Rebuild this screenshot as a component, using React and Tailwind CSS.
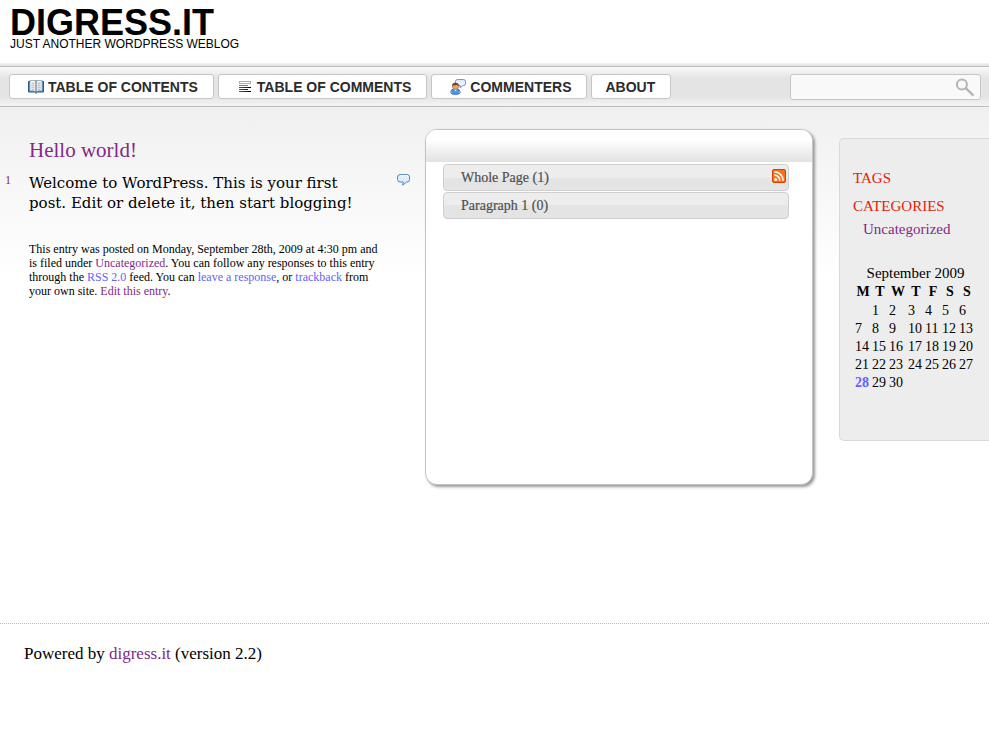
import React from 'react';

const purple = 'text-[#822a87]';
const blue = 'text-[#6262ff]';

const weeks = [
  ['', 1, 2, 3, 4, 5, 6],
  [7, 8, 9, 10, 11, 12, 13],
  [14, 15, 16, 17, 18, 19, 20],
  [21, 22, 23, 24, 25, 26, 27],
  [28, 29, 30, '', '', '', ''],
];

function BookIcon() {
  return (
    <svg width="16" height="14" viewBox="0 0 16 14" aria-hidden="true">
      <path d="M0.5 1.5H1.5V1H14.5V1.5H15.5V12H9.5L8 13.3L6.5 12H0.5Z" fill="#4a86bf" stroke="#265a8c" />
      <path d="M2 1C4.5 0.3 6.7 0.5 8 1.6V11.8C6.3 10.6 4.3 10.5 2 11Z" fill="#fff" stroke="#7d99b3" strokeWidth="0.6" />
      <path d="M14 1C11.5 0.3 9.3 0.5 8 1.6V11.8C9.7 10.6 11.7 10.5 14 11Z" fill="#f6f6f6" stroke="#7d99b3" strokeWidth="0.6" />
      <path d="M3.3 3.2H6.5M3.3 5.2H6.5M3.3 7.2H6.5M3.3 9.2H6.5M9.5 3.2H12.7M9.5 5.2H12.7M9.5 7.2H12.7M9.5 9.2H12.7" stroke="#a5a5a5" strokeWidth="0.9" />
      <path d="M8 1.6V12.4" stroke="#777" strokeWidth="0.8" />
    </svg>
  );
}

function LinesIcon() {
  return (
    <svg width="14" height="11" viewBox="0 0 14 11" shapeRendering="crispEdges" aria-hidden="true">
      <defs>
        <linearGradient id="rule" x1="0" x2="12" y1="0" y2="0" gradientUnits="userSpaceOnUse">
          <stop offset="0" stopColor="#555" />
          <stop offset="1" stopColor="#000" />
        </linearGradient>
      </defs>
      <path d="M0 0.5H12M0 2.5H12M0.5 0V3M11.5 0V3" stroke="#acacac" />
      <path d="M0 4H9V5H0Z" fill="#777" />
      <path d="M0 6H12V7H0Z" fill="url(#rule)" />
      <path d="M0 8H9V9H0Z" fill="url(#rule)" />
      <path d="M0 10H12V11H0Z" fill="url(#rule)" />
    </svg>
  );
}

function CommenterIcon() {
  return (
    <svg width="16" height="16" viewBox="0 0 16 16" aria-hidden="true">
      <path d="M7.4 0.6H13.6Q15.5 0.8 15.5 2.4V4.6Q15.5 6.4 13.6 6.6H12.6L10.2 9V6.6H7.4Q5.4 6.4 5.4 4.6V2.4Q5.4 0.8 7.4 0.6Z" fill="#eaf3ff" stroke="#5c8fcc" />
      <path d="M0.7 13.5Q0.8 10.4 3.5 10H7.2Q10 10.4 10.2 13.5Q10 15.4 5.5 15.4Q0.8 15.4 0.7 13.5Z" fill="#4d97f0" stroke="#2762b4" strokeWidth="0.8" />
      <path d="M3.8 10.2L5.5 12L7.2 10.2" fill="#fff" />
      <circle cx="5.5" cy="7.4" r="3" fill="#e9a468" stroke="#a0622f" strokeWidth="0.6" />
      <path d="M2.1 7.4Q1.6 3.8 5.5 3.7Q9.2 3.8 8.9 7.2Q7.5 6.5 6.8 5.7Q5 6.8 3.3 6.3Q2.6 6.6 2.1 7.4Z" fill="#7a4320" />
      <path d="M1.5 12.4V14M9.4 12.4V14" stroke="#e9a468" strokeWidth="1.2" />
    </svg>
  );
}

function SearchIcon() {
  return (
    <svg width="20" height="19" viewBox="0 0 20 19" fill="none" stroke="#b5b5b5" aria-hidden="true">
      <circle cx="6.9" cy="6.4" r="5" strokeWidth="2" />
      <path d="M10.5 9.8L18.5 17.6" strokeWidth="2.4" />
    </svg>
  );
}

function BubbleIcon() {
  return (
    <svg width="14" height="12" viewBox="0 0 14 12" aria-hidden="true">
      <path d="M3 0.6H10Q12.5 0.6 12.5 3V5.6Q12.5 8 10 8H9.6L5.7 11.2L6.3 8H3Q0.6 8 0.6 5.6V3Q0.6 0.6 3 0.6Z" fill="#deedff" stroke="#5286c0" />
      <path d="M3 1.8H10Q11.3 1.8 11.3 3" fill="none" stroke="#fff" />
    </svg>
  );
}

function RssIcon() {
  return (
    <svg width="14" height="14" viewBox="0 0 14 14" aria-hidden="true">
      <rect x="0.5" y="0.5" width="13" height="13" rx="1.5" fill="#f8741b" stroke="#de3a08" />
      <circle cx="3.7" cy="10.4" r="1.5" fill="#fff" />
      <path d="M2.4 6.1A5.5 5.5 0 0 1 7.9 11.7M2.4 2.9A8.8 8.8 0 0 1 11.2 11.7" fill="none" stroke="#fff" strokeWidth="1.6" />
    </svg>
  );
}

function NavItem({ icon, children, className }) {
  return (
    <li>
      <a
        href="#"
        className={`flex h-[25px] items-center gap-1 rounded-[3px] border border-[#c6c6c6] bg-white text-[14px] leading-4 font-bold whitespace-nowrap text-[#2b2b2b] ${className}`}
      >
        {icon}
        {children}
      </a>
    </li>
  );
}

function Section({ title, rss }) {
  return (
    <li className="flex h-[27px] items-start justify-between rounded border border-[#cfcfcf] bg-linear-to-b from-[#ededed] from-50% to-[#e4e4e4] to-50% pr-[2px] pl-[17px]">
      <button type="button" className="mt-1 text-left text-[14px] leading-[18px] text-[#505050] [-webkit-text-stroke:0.2px_#505050]">
        {title}
      </button>
      {rss && (
        <a href="#" aria-label="Comments feed" className="mt-1">
          <RssIcon />
        </a>
      )}
    </li>
  );
}

export default function App() {
  return (
    <div className="min-h-screen bg-white font-['Liberation_Serif',serif] text-black">
      <header className="h-[63px] pt-1 pl-[10px] font-['Liberation_Sans',sans-serif]">
        <h1 className="text-[36px] leading-[38px] font-bold">DIGRESS.IT</h1>
        <p className="-mt-[6px] text-[12px] leading-4">JUST ANOTHER WORDPRESS WEBLOG</p>
      </header>

      <div className="h-[3px] bg-linear-to-b from-[#f5f5f5] to-[#dedede]" />
      <nav className="flex h-[41px] items-start justify-between border-y border-[#bdbdbd] bg-[linear-gradient(#f9f9f9,#e4e4e4_30%,#e4e4e4_75%,#f4f4f4)] pt-[7px] pr-2 pl-[9px] font-['Liberation_Sans',sans-serif]">
        <ul className="flex gap-1">
          <NavItem icon={<BookIcon />} className="pr-[15px] pl-[18px]">TABLE OF CONTENTS</NavItem>
          <NavItem icon={<LinesIcon />} className="pr-[15px] pl-5">TABLE OF COMMENTS</NavItem>
          <NavItem icon={<CommenterIcon />} className="pr-[15px] pl-[18px]">COMMENTERS</NavItem>
          <NavItem className="pr-[15px] pl-[13px]">ABOUT</NavItem>
        </ul>
        <form className="flex h-[26px] w-[191px] items-center rounded-[3px] border border-[#c6c6c6] bg-[#f9f9f9] pr-[5px]" onSubmit={(e) => e.preventDefault()}>
          <input type="search" aria-label="Search" className="min-w-0 flex-1 bg-transparent px-2 text-[14px] outline-none" />
          <button type="submit" aria-label="Search">
            <SearchIcon />
          </button>
        </form>
      </nav>

      <main className="flex min-h-[516px] items-start bg-linear-to-b from-[#f0f0f0] to-white to-[170px]">
        <article className="min-w-0 flex-1 pt-[29px] pr-[14px] pl-[5px]">
          <h2 className={`pl-6 text-[21px] leading-7 ${purple}`}>
            <a href="#">Hello world!</a>
          </h2>
          <div className="mt-[9px] flex items-start">
            <a href="#" className={`w-6 text-[12px] leading-[14px] ${purple}`}>1</a>
            <p className="min-w-0 flex-1 pr-8 font-['DejaVu_Serif',serif] text-[15px] leading-5">
              Welcome to WordPress. This is your first post. Edit or delete it, then start blogging!
            </p>
            <a href="#" aria-label="Comment on paragraph 1" className="pt-px">
              <BubbleIcon />
            </a>
          </div>
          <p className="mt-[29px] pl-6 text-[12px] leading-[14px]">
            This entry was posted on Monday, September 28th, 2009 at 4:30 pm and<br />
            is filed under <a href="#" className={purple}>Uncategorized</a>. You can follow any responses to this entry<br />
            through the <a href="#" className={blue}>RSS 2.0</a> feed. You can <a href="#" className={blue}>leave a response</a>, or{' '}
            <a href="#" className={blue}>trackback</a> from<br />
            your own site. <a href="#" className={purple}>Edit this entry</a>.
          </p>
        </article>

        <section className="mt-[22px] h-[356px] w-[388px] shrink-0 overflow-hidden rounded-[12px] border border-[#c4c4c4] bg-white shadow-[2px_2px_3px_#999]">
          <div className="h-8 bg-linear-to-b from-white from-30% to-[#e2e2e2]" />
          <ul className="flex flex-col gap-px pt-[2px] pr-[23px] pl-[17px]">
            <Section title="Whole Page (1)" rss />
            <Section title="Paragraph 1 (0)" />
          </ul>
        </section>

        <aside className="mt-[31px] ml-[26px] h-[303px] w-[150px] shrink-0 rounded-l-[5px] border border-r-0 border-[#d9d9d9] bg-[#ededed] pt-[25px] pl-[13px] text-[15px]">
          <h3 className="leading-7 text-[#e01f08]">TAGS</h3>
          <h3 className="leading-7 text-[#e01f08]">CATEGORIES</h3>
          <ul className="pl-[10px] leading-[18px]">
            <li><a href="#" className={purple}>Uncategorized</a></li>
          </ul>
          <table className="mt-[26px] ml-[2px] table-fixed border-collapse text-left text-[14px] leading-[18px]">
            <caption className="text-[15px] leading-[18px]">September 2009</caption>
            <colgroup>
              <col className="w-[17px]" />
              <col className="w-[17px]" />
              <col className="w-[19px]" />
              <col className="w-[17px]" />
              <col className="w-[17px]" />
              <col className="w-[17px]" />
              <col className="w-[17px]" />
            </colgroup>
            <thead>
              <tr className="h-5 font-bold">
                {['M', 'T', 'W', 'T', 'F', 'S', 'S'].map((d, i) => (
                  <th key={i} scope="col" className="p-0 pr-px text-center">{d}</th>
                ))}
              </tr>
            </thead>
            <tbody>
              {weeks.map((week, i) => (
                <tr key={i}>
                  {week.map((day, j) => (
                    <td key={j} className="p-0">
                      {day === 28 ? <a href="#" className={`font-bold ${blue}`}>28</a> : day}
                    </td>
                  ))}
                </tr>
              ))}
            </tbody>
          </table>
        </aside>
      </main>

      <footer className="border-t border-dotted border-[#bbb] pt-[19px] pl-6 text-[17px] leading-[22px]">
        Powered by <a href="#" className={purple}>digress.it</a> (version 2.2)
      </footer>
    </div>
  );
}
